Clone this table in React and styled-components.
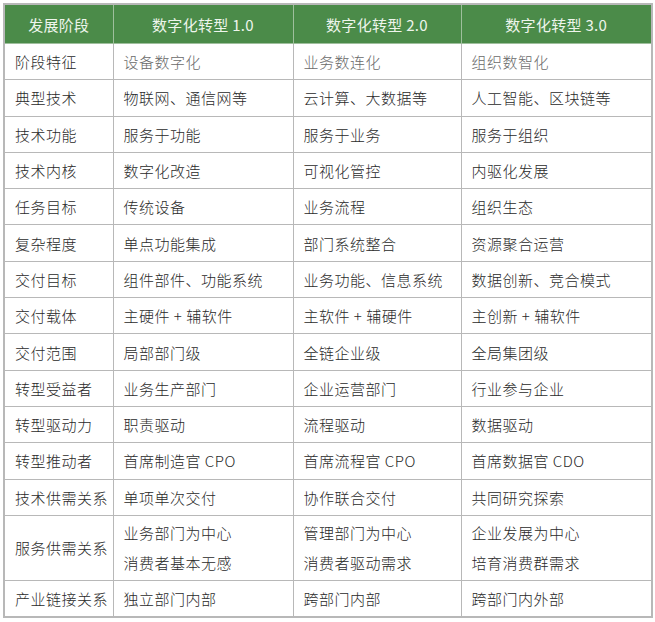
import React from "react";
import styled, { createGlobalStyle } from "styled-components";

const Global = createGlobalStyle`
  html, body { margin: 0; padding: 0; background: #fff; }
  body { font-family: "Noto Sans CJK SC", "Noto Sans", sans-serif; }
`;

const Page = styled.div`
  padding: 3px 0 0 3px;
  width: 648px;
`;

const Table = styled.table`
  border-collapse: collapse;
  width: 648px;
  table-layout: fixed;
  border: 2px solid #b8b8b8;
`;

const HeadCell = styled.th`
  background: #4b8b49;
  color: #eef5ec;
  font-weight: 400;
  font-size: 15px;
  height: 38px;
  padding: 0;
  text-align: center;
  border: 1px solid #9fbf9d;
  letter-spacing: 0.3px;
`;

const Row = styled.tr`
  height: ${(p) => (p.$double ? 65 : 36.3)}px;
`;

const Cell = styled.td`
  border: 1px solid #b8b8b8;
  padding: 0 0 0 ${(p) => (p.$first ? 10 : 10)}px;
  font-size: 15px;
  font-weight: 300;
  color: ${(p) => (p.$light ? "#6a6a6a" : "#2a2a2a")};
  letter-spacing: 0.5px;
  vertical-align: middle;
  white-space: nowrap;
`;

const Line = styled.div`
  line-height: 30px;
`;

const cols = [109, 180, 168, 191];

const rows = [
  ["阶段特征", "设备数字化", "业务数连化", "组织数智化"],
  ["典型技术", "物联网、通信网等", "云计算、大数据等", "人工智能、区块链等"],
  ["技术功能", "服务于功能", "服务于业务", "服务于组织"],
  ["技术内核", "数字化改造", "可视化管控", "内驱化发展"],
  ["任务目标", "传统设备", "业务流程", "组织生态"],
  ["复杂程度", "单点功能集成", "部门系统整合", "资源聚合运营"],
  ["交付目标", "组件部件、功能系统", "业务功能、信息系统", "数据创新、竞合模式"],
  ["交付载体", "主硬件 + 辅软件", "主软件 + 辅硬件", "主创新 + 辅软件"],
  ["交付范围", "局部部门级", "全链企业级", "全局集团级"],
  ["转型受益者", "业务生产部门", "企业运营部门", "行业参与企业"],
  ["转型驱动力", "职责驱动", "流程驱动", "数据驱动"],
  ["转型推动者", "首席制造官 CPO", "首席流程官 CPO", "首席数据官 CDO"],
  ["技术供需关系", "单项单次交付", "协作联合交付", "共同研究探索"],
  [
    "服务供需关系",
    ["业务部门为中心", "消费者基本无感"],
    ["管理部门为中心", "消费者驱动需求"],
    ["企业发展为中心", "培育消费群需求"],
  ],
  ["产业链接关系", "独立部门内部", "跨部门内部", "跨部门内外部"],
];

export default function App() {
  return (
    <>
      <Global />
      <Page>
        <Table>
          <colgroup>
            {cols.map((w, i) => (
              <col key={i} style={{ width: w }} />
            ))}
          </colgroup>
          <thead>
            <tr>
              <HeadCell>发展阶段</HeadCell>
              <HeadCell>数字化转型 1.0</HeadCell>
              <HeadCell>数字化转型 2.0</HeadCell>
              <HeadCell>数字化转型 3.0</HeadCell>
            </tr>
          </thead>
          <tbody>
            {rows.map((r, i) => {
              const dbl = Array.isArray(r[1]);
              return (
                <Row key={i} $double={dbl}>
                  {r.map((c, j) => (
                    <Cell key={j} $first={j === 0} $light={i === 0 && j > 0}>
                      {Array.isArray(c)
                        ? c.map((t, k) => <Line key={k}>{t}</Line>)
                        : c}
                    </Cell>
                  ))}
                </Row>
              );
            })}
          </tbody>
        </Table>
      </Page>
    </>
  );
}
